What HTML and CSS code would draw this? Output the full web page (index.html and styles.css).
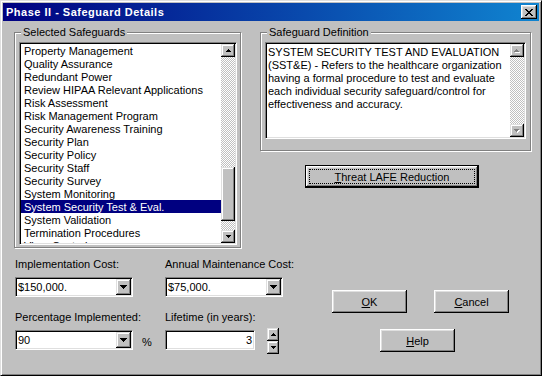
FILE: index.html
```html
<!DOCTYPE html>
<html>
    <head>
        <title>Phase II - Safeguard Details</title>
        <meta charset="UTF-8">
        <link rel="stylesheet" href="styles.css">
    </head>
    <body>
        <div id="dialog">
            <div class="titlebar">
                <span class="title">Phase II - Safeguard Details</span>
                <div class="close">
                    <svg width="8" height="7" viewBox="0 0 8 7" shape-rendering="crispEdges"><path d="M0 0h2v1H0zM6 0h2v1H6zM1 1h2v1H1zM5 1h2v1H5zM2 2h4v1H2zM3 3h2v1H3zM2 4h4v1H2zM1 5h2v1H1zM5 5h2v1H5zM0 6h2v1H0zM6 6h2v1H6z"/></svg>
                </div>
            </div>
            <div class="content">
                <div class="top">
                    <div class="group" id="safeguards">
                        <div class="caption">Selected Safeguards</div>
                        <div class="sunken listbox">
                            <div class="items">
                                <div class="item">Property Management</div>
                                <div class="item">Quality Assurance</div>
                                <div class="item">Redundant Power</div>
                                <div class="item">Review HIPAA Relevant Applications</div>
                                <div class="item">Risk Assessment</div>
                                <div class="item">Risk Management Program</div>
                                <div class="item">Security Awareness Training</div>
                                <div class="item">Security Plan</div>
                                <div class="item">Security Policy</div>
                                <div class="item">Security Staff</div>
                                <div class="item">Security Survey</div>
                                <div class="item">System Monitoring</div>
                                <div class="item sel">System Security Test &amp; Eval.</div>
                                <div class="item">System Validation</div>
                                <div class="item">Termination Procedures</div>
                                <div class="item">Virus Control</div>
                            </div>
                            <div class="vscroll">
                                <div class="sbtn"><svg width="5" height="3" viewBox="0 0 5 3" shape-rendering="crispEdges"><path d="M2 0h1v1H2zM1 1h3v1H1zM0 2h5v1H0z"/></svg></div>
                                <div class="track" style="height: 110px"></div>
                                <div class="thumb" style="height: 54px"></div>
                                <div class="track" style="height: 9px"></div>
                                <div class="sbtn"><svg width="5" height="3" viewBox="0 0 5 3" shape-rendering="crispEdges"><path d="M0 0h5v1H0zM1 1h3v1H1zM2 2h1v1H2z"/></svg></div>
                            </div>
                        </div>
                    </div>
                    <div class="right">
                        <div class="group" id="definition">
                            <div class="caption">Safeguard Definition</div>
                            <div class="sunken memo">
                                <div class="memo-text">SYSTEM SECURITY TEST AND EVALUATION<br>(SST&amp;E) - Refers to the healthcare organization<br>having a formal procedure to test and evaluate<br>each individual security safeguard/control for<br>effectiveness and accuracy.</div>
                                <div class="vscroll">
                                    <div class="sbtn"><svg width="6" height="4" viewBox="0 0 6 4" shape-rendering="crispEdges"><path fill="#fff" d="M3 1h1v1H3zM2 2h3v1H2zM1 3h5v1H1z"/><path fill="#808080" d="M2 0h1v1H2zM1 1h3v1H1zM0 2h5v1H0z"/></svg></div>
                                    <div class="track grow"></div>
                                    <div class="sbtn"><svg width="6" height="4" viewBox="0 0 6 4" shape-rendering="crispEdges"><path fill="#fff" d="M1 1h5v1H1zM2 2h3v1H2zM3 3h1v1H3z"/><path fill="#808080" d="M0 0h5v1H0zM1 1h3v1H1zM2 2h1v1H2z"/></svg></div>
                                </div>
                            </div>
                        </div>
                        <button class="button default threat"><span class="focus"><u>T</u>hreat LAFE Reduction</span></button>
                    </div>
                </div>
                <div class="bottom">
                    <div class="fields">
                        <div class="field">
                            <div class="label">Implementation Cost:</div>
                            <div class="sunken combo">
                                <span class="value">$150,000.</span>
                                <span class="dropbtn"><svg width="7" height="4" viewBox="0 0 7 4" shape-rendering="crispEdges"><path d="M0 0h7v1H0zM1 1h5v1H1zM2 2h3v1H2zM3 3h1v1H3z"/></svg></span>
                            </div>
                        </div>
                        <div class="field">
                            <div class="label">Annual Maintenance Cost:</div>
                            <div class="sunken combo">
                                <span class="value">$75,000.</span>
                                <span class="dropbtn"><svg width="7" height="4" viewBox="0 0 7 4" shape-rendering="crispEdges"><path d="M0 0h7v1H0zM1 1h5v1H1zM2 2h3v1H2zM3 3h1v1H3z"/></svg></span>
                            </div>
                        </div>
                        <div class="field">
                            <div class="label">Percentage Implemented:</div>
                            <div class="row">
                                <div class="sunken combo">
                                    <span class="value">90</span>
                                    <span class="dropbtn"><svg width="7" height="4" viewBox="0 0 7 4" shape-rendering="crispEdges"><path d="M0 0h7v1H0zM1 1h5v1H1zM2 2h3v1H2zM3 3h1v1H3z"/></svg></span>
                                </div>
                                <span class="pct">%</span>
                            </div>
                        </div>
                        <div class="field">
                            <div class="label">Lifetime (in years):</div>
                            <div class="row">
                                <div class="sunken edit">3</div>
                                <div class="spin">
                                    <div class="sbtn"><svg width="5" height="3" viewBox="0 0 5 3" shape-rendering="crispEdges"><path d="M2 0h1v1H2zM1 1h3v1H1zM0 2h5v1H0z"/></svg></div>
                                    <div class="sbtn"><svg width="5" height="3" viewBox="0 0 5 3" shape-rendering="crispEdges"><path d="M0 0h5v1H0zM1 1h3v1H1zM2 2h1v1H2z"/></svg></div>
                                </div>
                            </div>
                        </div>
                    </div>
                    <div class="actions">
                        <button class="button"><u>O</u>K</button>
                        <button class="button"><u>C</u>ancel</button>
                        <button class="button help"><u>H</u>elp</button>
                    </div>
                </div>
            </div>
        </div>
    </body>
</html>
```

FILE: styles.css
```css
body{
    margin: 0;
    font-family: "Liberation Sans", Arial, sans-serif;
    font-size: 11px;
    color: #000;
}
#dialog{
    width: 542px;
    height: 376px;
    box-sizing: border-box;
    background: #c0c0c0;
    border: 1px solid;
    border-color: #dfdfdf #000 #000 #dfdfdf;
    box-shadow: inset 1px 1px #fff, inset -1px -1px #808080;
    padding: 2px;
}
.titlebar{
    height: 18px;
    background: linear-gradient(to right, #000080, #1084d0);
    display: flex;
    align-items: center;
    justify-content: space-between;
    padding: 0 2px 0 3px;
}
.title{
    color: #fff;
    font-weight: bold;
    letter-spacing: 0.5px;
    line-height: 18px;
}
.close{
    width: 16px;
    height: 14px;
    box-sizing: border-box;
    background: #c0c0c0;
    box-shadow: inset -1px -1px #000, inset 1px 1px #fff, inset -2px -2px #808080, inset 2px 2px #dfdfdf;
    display: flex;
    align-items: center;
    justify-content: center;
    padding-right: 1px;
}
.close svg{
    display: block;
}
.content{
    padding: 11px 0 0 11px;
}
.top{
    display: flex;
    gap: 19px;
    align-items: flex-start;
}
.group{
    box-sizing: border-box;
    border: 1px solid #808080;
    box-shadow: 1px 1px #fff, inset 1px 1px #fff;
    padding: 0 3px 2px 4px;
}
#safeguards{
    width: 227px;
}
#definition{
    width: 271px;
    padding: 0 4px 11px 4px;
}
.caption{
    display: table;
    margin: -7px 0 0 2px;
    padding: 0 2px;
    background: #c0c0c0;
    line-height: 13px;
}
.sunken{
    box-sizing: border-box;
    border: 1px solid;
    border-color: #808080 #fff #fff #808080;
    box-shadow: inset 1px 1px #000, inset -1px -1px #dfdfdf;
    background: #fff;
    padding: 1px;
}
.listbox{
    margin-top: 3px;
    height: 203px;
    display: flex;
}
.items{
    flex: 1;
    overflow: hidden;
}
.item{
    height: 12px;
    padding: 1px 0 0 3px;
    line-height: 13px;
    white-space: nowrap;
}
.sel{
    background: #000080;
    color: #fff;
}
.vscroll{
    width: 14px;
    display: flex;
    flex-direction: column;
}
.sbtn, .thumb, .dropbtn{
    background: #c0c0c0;
    box-shadow: inset -1px -1px #000, inset 1px 1px #dfdfdf, inset -2px -2px #808080, inset 2px 2px #fff;
}
.sbtn{
    height: 13px;
    flex: none;
    display: flex;
    align-items: center;
    justify-content: center;
}
.sbtn svg, .dropbtn svg{
    display: block;
}
.track{
    background-image: conic-gradient(#c0c0c0 25%, #fff 0 50%, #c0c0c0 0 75%, #fff 0);
    background-size: 2px 2px;
}
.grow{
    flex: 1;
}
.memo{
    margin-top: 3px;
    height: 97px;
    display: flex;
}
.memo-text{
    flex: 1;
    padding: 2px 0 0 1px;
    line-height: 13px;
    white-space: nowrap;
    overflow: hidden;
}
.button{
    box-sizing: border-box;
    background: #c0c0c0;
    font: inherit;
    color: #000;
    border: none;
    padding: 0;
    box-shadow: inset -1px -1px #000, inset 1px 1px #fff, inset -2px -2px #808080, inset 2px 2px #dfdfdf;
    display: flex;
    align-items: center;
    justify-content: center;
    height: 23px;
    width: 75px;
}
.default{
    border: 1px solid #000;
}
.threat{
    width: 174px;
    margin: 14px 0 0 45px;
}
.focus{
    flex: 1;
    align-self: stretch;
    margin: 3px;
    border: 1px dotted #000;
    display: flex;
    align-items: center;
    justify-content: center;
}
.bottom{
    display: flex;
    margin: 10px 0 0 1px;
}
.fields{
    display: grid;
    grid-template-columns: 150px 125px;
    row-gap: 13px;
}
.label{
    line-height: 13px;
    margin-bottom: 6px;
    white-space: nowrap;
}
.combo{
    width: 118px;
    height: 20px;
    display: flex;
}
.value{
    flex: 1;
    line-height: 16px;
    padding-left: 1px;
}
.dropbtn{
    width: 15px;
    display: flex;
    align-items: center;
    justify-content: center;
}
.row{
    display: flex;
    align-items: flex-start;
}
.pct{
    margin-left: 9px;
    line-height: 20px;
    padding-top: 2px;
}
.edit{
    width: 90px;
    height: 20px;
    text-align: right;
    line-height: 16px;
    padding-right: 2px;
}
.spin{
    width: 12px;
    margin: -2px 0 -4px 12px;
    display: flex;
    flex-direction: column;
}
.actions{
    display: grid;
    grid-template-columns: 75px 75px;
    column-gap: 27px;
    row-gap: 16px;
    margin-left: 42px;
    padding-top: 32px;
    align-content: start;
}
.help{
    grid-column: 1 / 3;
    margin-left: 48px;
}
```
